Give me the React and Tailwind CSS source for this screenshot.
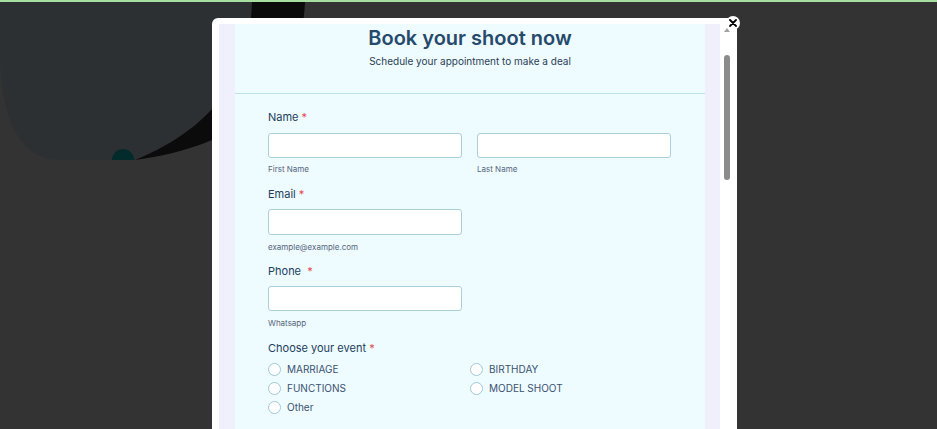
import React from "react";

const Label = ({ children, gap = false }) => (
  <div className="text-[11px] font-normal text-[#223d5c] leading-none">
    {children}
    {gap ? "\u00a0\u00a0" : " "}
    <span className="text-[#e5484d]">*</span>
  </div>
);

const Input = ({ className = "" }) => (
  <div className={`h-[25px] w-[194px] rounded-[3px] border border-[#a9d0dc] bg-white ${className}`} />
);

const Sub = ({ children, className = "mt-[7px]" }) => (
  <div className={`text-[8px] text-[#56657c] leading-none ${className}`}>{children}</div>
);

const Radio = ({ label }) => (
  <div className="flex items-center gap-[6px] h-[19px]">
    <span className="w-[13px] h-[13px] rounded-full border border-[#9fc9d8] bg-white" />
    <span className="text-[10px] text-[#3b5270]">{label}</span>
  </div>
);

export default function App() {
  return (
    <div className="relative w-[937px] h-[429px] overflow-hidden bg-[#333333] font-['Inter',sans-serif]">
      {/* top bar */}
      <div className="absolute top-0 left-0 right-0 h-[2px] bg-[#a6dfa0]" />

      {/* backdrop drawing */}
      <svg className="absolute top-0 left-0" width="937" height="429" viewBox="0 0 937 429">
        <path d="M0 2 H252 C250 70 220 125 135 160 H60 C20 160 2 120 0 60 Z" fill="#2d3033" />
        <path d="M252 2 H305 C300 100 240 145 135 160 C220 125 250 70 252 2 Z" fill="#0b0b0c" />
        <path d="M112 160 A11 11 0 0 1 134 160 Z" fill="#032b2b" />
      </svg>

      {/* modal */}
      <div className="absolute left-[212px] top-[18px] w-[525px] h-[420px] bg-white rounded-t-[6px] pt-[6px] pl-[7px] flex">
        <div className="w-[16px] bg-[#f0f0fc]" />
        <div className="w-[470px] bg-[#eefbff]">
          <div className="h-[70px] border-b border-[#bfe3ee] flex flex-col items-center">
            <h1 className="mt-[1px] text-[20px] font-semibold text-[#264a6b] leading-[26px]">Book your shoot now</h1>
            <p className="mt-[3px] text-[10px] text-[#2b3e55] leading-[14px]">Schedule your appointment to make a deal</p>
          </div>

          <div className="pl-[33px] pt-[18px]">
            <Label>Name</Label>
            <div className="flex gap-[15px] mt-[10px]">
              <div>
                <Input />
                <Sub>First Name</Sub>
              </div>
              <div>
                <Input />
                <Sub>Last Name</Sub>
              </div>
            </div>

            <div className="mt-[16px]">
              <Label>Email</Label>
              <Input className="mt-[9px] w-[193px] h-[26px]" />
              <Sub className="mt-[8px]">example@example.com</Sub>
            </div>

            <div className="mt-[15px]">
              <Label gap>Phone</Label>
              <Input className="mt-[9px] w-[193px]" />
              <Sub className="mt-[8px]">Whatsapp</Sub>
            </div>

            <div className="mt-[16px]">
              <Label>Choose your event</Label>
              <div className="mt-[6px] grid grid-cols-[202px_1fr]">
                <Radio label="MARRIAGE" />
                <Radio label="BIRTHDAY" />
                <Radio label="FUNCTIONS" />
                <Radio label="MODEL SHOOT" />
                <Radio label="Other" />
              </div>
            </div>
          </div>
        </div>
        <div className="w-[15px] bg-[#f0f0fc]" />
        {/* scrollbar */}
        <div className="w-[13px] bg-white flex flex-col items-center">
          <div className="mt-[4px] w-0 h-0 border-l-[3px] border-r-[3px] border-b-[4px] border-l-transparent border-r-transparent border-b-[#a3a3a3]" />
          <div className="mt-[23px] w-[6px] h-[125px] rounded-full bg-[#8b8b8b]" />
        </div>
      </div>

      {/* close button */}
      <div className="absolute left-[726px] top-[16px] w-[14px] h-[14px] rounded-full bg-white flex items-center justify-center">
        <svg width="8" height="8" viewBox="0 0 8 8">
          <path d="M1 1 L7 7 M7 1 L1 7" stroke="#000" strokeWidth="1.8" strokeLinecap="round" />
        </svg>
      </div>
    </div>
  );
}
